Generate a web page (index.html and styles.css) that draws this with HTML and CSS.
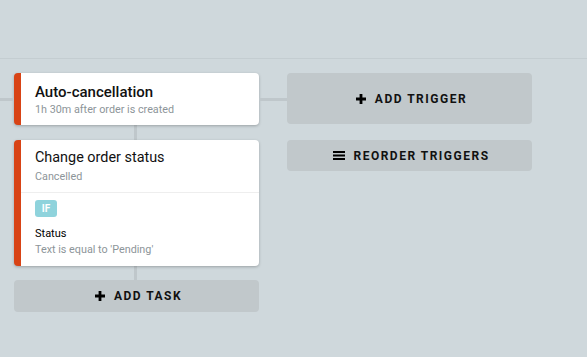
FILE: index.html
```html
<!DOCTYPE html>
<html lang="en">
<head>
    <meta charset="UTF-8">
    <meta name="viewport" content="width=device-width, initial-scale=1.0">
    <title>Workflow</title>
    <link rel="stylesheet" href="styles.css">
</head>
<body>

    <div class="toolbar"></div>

    <div class="board">
        <div class="flow">
            <div class="card card-trigger">
                <div class="card-head">
                    <div class="card-title bold">Auto-cancellation</div>
                    <div class="card-sub">1h 30m after order is created</div>
                </div>
            </div>

            <div class="link link-a"></div>

            <div class="card">
                <div class="card-head divided">
                    <div class="card-title">Change order status</div>
                    <div class="card-sub">Cancelled</div>
                </div>
                <div class="card-body">
                    <span class="badge">IF</span>
                    <div class="cond-name">Status</div>
                    <div class="card-sub">Text is equal to 'Pending'</div>
                </div>
            </div>

            <div class="link link-b"></div>

            <button class="ghost-btn task-btn">
                <svg class="icon" width="10" height="10" viewBox="0 0 10 10"><path d="M3.6 0h2.8v3.6H10v2.8H6.4V10H3.6V6.4H0V3.6h3.6z" fill="#000"/></svg>
                ADD TASK
            </button>
        </div>

        <div class="side">
            <button class="ghost-btn trigger-btn">
                <svg class="icon" width="10" height="10" viewBox="0 0 10 10"><path d="M3.6 0h2.8v3.6H10v2.8H6.4V10H3.6V6.4H0V3.6h3.6z" fill="#000"/></svg>
                ADD TRIGGER
            </button>
            <button class="ghost-btn reorder-btn">
                <svg class="icon" width="12" height="9" viewBox="0 0 12 9"><rect y="0" width="12" height="2" fill="#000"/><rect y="3.5" width="12" height="2" fill="#000"/><rect y="7" width="12" height="2" fill="#000"/></svg>
                REORDER TRIGGERS
            </button>
        </div>
    </div>

</body>
</html>
```

FILE: styles.css
```css
body {
    font-family: 'Roboto', 'Liberation Sans', sans-serif;
    background-color: #cfd8dc;
    color: #000;
    margin: 0;
    padding: 0;
    height: 357px;
    overflow: hidden;
}

.toolbar {
    height: 58px;
    border-bottom: 1px solid #c4cdd1;
}

.board {
    display: flex;
    align-items: flex-start;
    padding: 14px 0 0 14px;
}

.flow {
    width: 245px;
    display: flex;
    flex-direction: column;
}

.side {
    width: 245px;
    margin-left: 28px;
    display: flex;
    flex-direction: column;
    gap: 16px;
}

.card {
    position: relative;
    background-color: #fff;
    border-left: 7px solid #d84315;
    border-radius: 4px;
    box-shadow: 0 1px 3px rgba(0, 0, 0, 0.25);
}

/* horizontal connector running behind the trigger card */
.card-trigger::before,
.card-trigger::after {
    content: '';
    position: absolute;
    top: 25px;
    height: 3px;
    background-color: #bfc7cb;
}

.card-trigger::before {
    left: -21px;
    width: 14px;
}

.card-trigger::after {
    right: -28px;
    width: 28px;
}

.card-head {
    padding: 9px 14px 7px;
}

.card-head .card-sub {
    margin-top: 2px;
}

.card-trigger .card-head {
    padding: 10px 14px 7px;
}

.card-trigger .card-sub {
    margin-top: 1px;
}

.divided {
    border-bottom: 1px solid #eeeeee;
}

.card-title {
    font-size: 14.4px;
    line-height: 18px;
    color: #111;
}

.card-title.bold {
    font-weight: 500;
    font-size: 15px;
}

.card-sub {
    font-size: 10.8px;
    line-height: 16px;
    color: #8d9599;
}

.card-body {
    padding: 7px 14px 8px;
}

.badge {
    display: block;
    width: 22px;
    height: 17px;
    line-height: 17px;
    text-align: center;
    border-radius: 3px;
    background-color: #8fd3dc;
    color: #fff;
    font-size: 10px;
    font-weight: bold;
}

.cond-name {
    font-size: 11px;
    line-height: 16px;
    margin-top: 9px;
    color: #000;
}

.link {
    width: 3px;
    align-self: center;
    margin-right: 2px;
    background-color: #bfc7cb;
}

.link-a {
    height: 15px;
}

.link-b {
    height: 14px;
}

.ghost-btn {
    display: flex;
    align-items: center;
    justify-content: center;
    gap: 9px;
    width: 100%;
    border: none;
    border-radius: 4px;
    background-color: #c1c8cb;
    font-family: 'Roboto', 'Liberation Sans', sans-serif;
    font-size: 12px;
    font-weight: bold;
    letter-spacing: 1.5px;
    color: #111;
    padding: 0 0 0 4px;
}

.task-btn {
    height: 32px;
}

.trigger-btn {
    height: 51px;
}

.reorder-btn {
    height: 31px;
    gap: 8px;
}

.icon {
    display: block;
}
```
